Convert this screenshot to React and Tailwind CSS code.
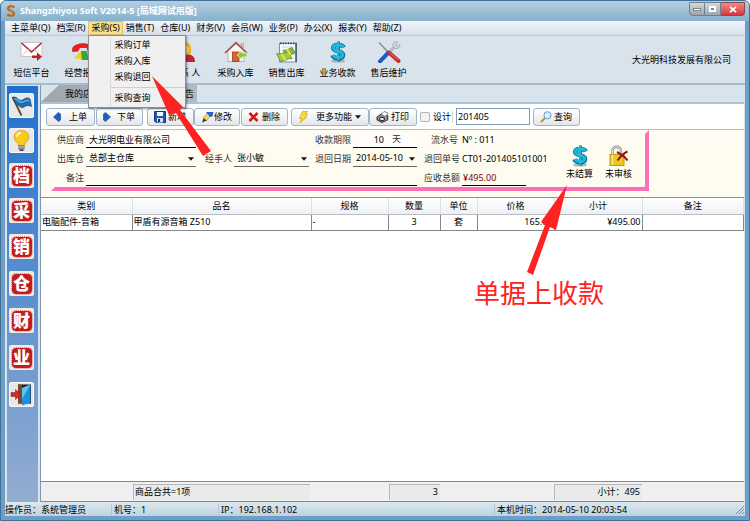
import {useState} from 'react';

const MailIcon = () => (
    <svg width="24" height="22" viewBox="0 0 24 22">
        <rect x="1" y="1.5" width="21" height="14" fill="#fdfdfd" stroke="#c9c4c6" />
        <path d="M1.5 2 L11.5 11 L21.5 2" fill="none" stroke="#b5203a" strokeWidth="1.6" />
        <path d="M1.5 15 L8.5 8.5 M21.5 15 L14.5 8.5" stroke="#d9ccd0" />
        <path d="M12 14.5 H17 V11.5 L22 15.8 L17 20 V17 H12 Z" fill="#c41f26" />
    </svg>
);

const PhoneIcon = () => (
    <svg width="24" height="22" viewBox="0 0 24 22">
        <path d="M1 9 C1 0 23 0 23 9 L22 11 H17 L15.5 7 H9 L7 10.5 L1.5 11 Z" fill="#e02222" />
        <path d="M3 17 L10 10 L12 19 Z" fill="#f6cf1c" />
        <path d="M10 10 H16 L18 19 H11 Z" fill="#3aa33c" />
    </svg>
);

const PersonIcon = () => (
    <svg width="24" height="22" viewBox="0 0 24 22">
        <path d="M2 21 C2 13 8 13 12 13 C17 13 22 14 22 21 Z" fill="#c8202c" />
        <path d="M9 13 L12 20 L15 13 Z" fill="#2a4fb4" />
        <path d="M6 8 C5 0 18 -1 18 7 L18 12 L14 14 H9 Z" fill="#e5b61c" />
        <ellipse cx="11.5" cy="8.5" rx="4" ry="5" fill="#f8d3a0" />
    </svg>
);

const HouseIcon = () => (
    <svg width="24" height="22" viewBox="0 0 24 22">
        <path d="M4 10 V20.5 H20 V10 L12 3 Z" fill="#fbf7f0" stroke="#b9b2aa" />
        <path d="M17 2.5 H19.5 V7 L17 5 Z" fill="#cfc8c0" stroke="#9c8f86" strokeWidth=".5" />
        <path d="M1 12 L12 1.5 L23 12" fill="none" stroke="#a64a3c" strokeWidth="1.6" />
        <rect x="8.5" y="11" width="6.5" height="9.5" fill="#d9642c" stroke="#7d3415" strokeWidth=".7" />
        <path d="M13 14 L18 9.5 V12 H23 V16 H18 V18.5 Z" fill="#8fc640" stroke="#e8f4cf" strokeWidth=".8" />
    </svg>
);

const NoteIcon = () => (
    <svg width="24" height="22" viewBox="0 0 24 22">
        <rect x="4.5" y="2.5" width="17" height="18.5" fill="#fafcff" stroke="#7f8fa8" />
        <path d="M21 3 V21" stroke="#3d5575" strokeWidth="1.5" />
        <path d="M5 2.2 H21.5" stroke="#3c4a60" strokeWidth="2" strokeDasharray="1.3 1.3" />
        <path d="M7 6 H19 M7 17 H19" stroke="#c3d0e2" />
        <path d="M8 9 C11 10 13 8 17 6.5 L20.5 12 C17 13 14 15 11 15.5 Z" fill="#7fb936" stroke="#4e8a1f" strokeWidth=".7" />
        <path d="M1.5 12.5 C5 14 9 11 13 11 L17 17.5 C12 17 10 21 5.5 20.5 Z" fill="#98cc4a" stroke="#4e8a1f" strokeWidth=".7" />
        <path d="M12 8.5 L15.5 13.8 M6.5 13 L10.5 19.2" stroke="#f3dc4a" strokeWidth="2.2" />
    </svg>
);

const DollarIcon = () => (
    <svg width="18" height="22" viewBox="0 0 18 22">
        <ellipse cx="9" cy="20" rx="7" ry="1.6" fill="#8b98a6" opacity=".7" />
        <path
            d="M14.5 6.5 C13.5 3.5 4.5 2.6 4.2 7 C4 11 14.2 9.4 14 14 C13.6 18.4 5 18 3.6 14.2"
            fill="none"
            stroke="#0b6f92"
            strokeWidth="4.6"
        />
        <path d="M9.5 .5 V20.5" stroke="#0b6f92" strokeWidth="2.8" />
        <path
            d="M14 6.2 C13 3.4 4.7 2.8 4.4 6.8 C4.2 10.8 13.8 9.4 13.6 13.8 C13.2 17.6 5.4 17.4 4 14"
            fill="none"
            stroke="#1db6dc"
            strokeWidth="3.2"
        />
        <path d="M9 1 V20" stroke="#2fc0e2" strokeWidth="1.4" />
    </svg>
);

const ToolsIcon = () => (
    <svg width="24" height="22" viewBox="0 0 24 22">
        <path d="M2 1.5 L12 12" stroke="#8d8f92" strokeWidth="1.6" />
        <path d="M12 11 L20 4" stroke="#b9bcc0" strokeWidth="3" />
        <path d="M16 5 C15 1 19 0 21 1.2 L18.6 3.6 L20.4 5.6 L23 3.4 C23.5 6 21 8.6 17.6 7.4 Z" fill="#d4d6d9" stroke="#8e9195" strokeWidth=".6" />
        <path d="M11.5 11.5 L3 20.3" stroke="#2259c4" strokeWidth="4" strokeLinecap="round" />
        <path d="M12.5 12 L21.5 20" stroke="#cf2626" strokeWidth="4" strokeLinecap="round" />
        <path d="M12.5 11.4 L21 19" stroke="#f08080" strokeWidth=".9" />
    </svg>
);

const LockIcon = () => (
    <svg width="20" height="22" viewBox="0 0 20 22">
        <path d="M3.5 10 V6 C3.5 .5 12 .5 12 6 V8" fill="none" stroke="#8c8c8c" strokeWidth="2.6" />
        <path d="M3.5 10 V6 C3.5 .5 12 .5 12 6 V8" fill="none" stroke="#f4f4f4" strokeWidth="1" />
        <rect x="1" y="9.5" width="14" height="11" fill="#ecc81c" stroke="#c19a10" />
        <path d="M3.5 10 V20" stroke="#fbea86" strokeWidth="1.5" />
        <path d="M8 7 C12 9 16 12 18.5 15.5 M18.5 6.5 C14 8.5 11 12 8.5 15.5" fill="none" stroke="#8d1518" strokeWidth="2" />
    </svg>
);

const FlagIcon = () => (
    <svg width="23" height="23" viewBox="0 0 23 23">
        <path d="M2.5 3 L11.5 21.5" stroke="#6d4420" strokeWidth="1.8" />
        <path d="M2.8 3.5 C7 1.5 8.5 8 12.5 6 C15.5 4.2 17 3 20 5 L21.5 12.5 C18 10.5 16 12 13.5 13.2 C10 15 8.5 9.5 6.5 11 Z" fill="#1d6fb4" stroke="#0e3f73" strokeWidth=".7" />
        <path d="M4.5 5 C8 4.5 8.5 9.5 13 8 C16 6.5 17 6 19.5 7" fill="none" stroke="#69b5e4" strokeWidth="1.3" />
    </svg>
);

const BulbIcon = () => (
    <svg width="23" height="23" viewBox="0 0 23 23">
        <path d="M8 14.5 C1 9 4.5 1.5 11.5 1.5 C18.5 1.5 22 9 15 14.5 L14.5 16.5 H8.5 Z" fill="#f9c91b" stroke="#d99a10" strokeWidth=".8" />
        <path d="M7 8 C7 5 9 3.8 11 3.8" fill="none" stroke="#fff3b0" strokeWidth="2" />
        <rect x="8.3" y="16" width="6.4" height="4.5" fill="#7e8287" />
        <path d="M8.3 18 H14.7" stroke="#d3d6d9" strokeWidth=".8" />
        <path d="M9.5 21.3 H13.5" stroke="#3f4246" strokeWidth="1.4" />
    </svg>
);

const ExitIcon = () => (
    <svg width="23" height="23" viewBox="0 0 23 23">
        <rect x="8" y="1.5" width="13" height="19" fill="#1d1a17" />
        <rect x="8" y="1.5" width="4" height="19" fill="#7a4a25" />
        <path d="M12 5 L20.5 1.5 V19.5 L12 22.5 Z" fill="#1c93d8" />
        <path d="M12 5 L20.5 1.5 L12 16 Z" fill="#5cc4f2" />
        <path d="M1 9.5 H5.5 V6.5 L11 11.5 L5.5 16.5 V13.5 H1 Z" fill="#d8262a" stroke="#8f1216" strokeWidth=".5" />
    </svg>
);

const LeftIcon = () => (
    <svg width="8" height="10" viewBox="0 0 8 10">
        <path d="M5.5 .5 L.5 5 L5.5 9.5 L7.5 8 V2 Z" fill="#1f5fc0" stroke="#123c86" strokeWidth=".6" />
    </svg>
);

const RightIcon = () => (
    <svg width="8" height="10" viewBox="0 0 8 10">
        <path d="M2.5 .5 L7.5 5 L2.5 9.5 L.5 8 V2 Z" fill="#1f5fc0" stroke="#123c86" strokeWidth=".6" />
    </svg>
);

const SaveIcon = () => (
    <svg width="12" height="12" viewBox="0 0 12 12">
        <path d="M.5 .5 H11.5 V11.5 H2 L.5 10 Z" fill="#2458b8" stroke="#12357e" />
        <rect x="3" y="1" width="6" height="4" fill="#f2f6fc" />
        <rect x="3" y="7" width="6" height="4.5" fill="#d3dff2" />
        <rect x="4" y="8" width="2" height="3" fill="#12357e" />
    </svg>
);

const PencilIcon = () => (
    <svg width="13" height="12" viewBox="0 0 13 12">
        <path d="M1 11.5 L2.5 7 L6 9.5 Z" fill="#3a3a3a" />
        <path d="M2.5 7 L6.5 1.5 L10 4 L6 9.5 Z" fill="#f2dc5a" stroke="#8a7a2a" strokeWidth=".5" />
        <path d="M5 1 L12.5 1 L11.5 5.5 L9 6 Z" fill="#2a62c4" />
    </svg>
);

const CrossIcon = () => (
    <svg width="11" height="10" viewBox="0 0 11 10">
        <path d="M1.5 1 L9.5 9 M9.5 1 L1.5 9" stroke="#d01818" strokeWidth="2.6" />
    </svg>
);

const BoltIcon = () => (
    <svg width="11" height="12" viewBox="0 0 11 12">
        <path d="M4.5 .5 H9.5 L7.5 3.5 H9.5 L7 6.5 H8.5 L2 11.5 L4 7.5 H1.5 Z" fill="#f7dd3c" stroke="#c9a21c" strokeWidth=".7" />
    </svg>
);

const PrinterIcon = () => (
    <svg width="13" height="12" viewBox="0 0 13 12">
        <path d="M1 6 L6 2.5 L12 5 L11.5 9 L6 11.5 L1 9 Z" fill="#8f9296" stroke="#2e3033" />
        <path d="M5 3.5 L8 .5 L12 2 L9.5 5.5 Z" fill="#fff" stroke="#55585c" strokeWidth=".7" />
        <ellipse cx="6" cy="8" rx="2.6" ry="1.6" fill="#f4f4f4" stroke="#222" />
    </svg>
);

const SearchIcon = () => (
    <svg width="12" height="12" viewBox="0 0 12 12">
        <path d="M1 11 L5 7" stroke="#d08a2a" strokeWidth="2" />
        <circle cx="7.5" cy="4.3" r="3.6" fill="#d6eefb" stroke="#5c9ccc" />
    </svg>
);

const CaretIcon = ({className}) => (
    <svg width="6" height="4" viewBox="0 0 6 4" className={className}>
        <path d="M0 .3 H6 L3 3.7 Z" fill="#111" />
    </svg>
);

const menus = [
    '主菜单(Q)',
    '档案(R)',
    '采购(S)',
    '销售(T)',
    '仓库(U)',
    '财务(V)',
    '会员(W)',
    '业务(P)',
    '办公(X)',
    '报表(Y)',
    '帮助(Z)',
];

const reportShortcuts = [
    {name: '短信平台', icon: <MailIcon />},
    {name: '经营报表', icon: <PhoneIcon />},
];

const tradeShortcuts = [
    {name: '联 系 人', icon: <PersonIcon />},
    {name: '采购入库', icon: <HouseIcon />},
    {name: '销售出库', icon: <NoteIcon />},
    {name: '业务收款', icon: <DollarIcon />},
    {name: '售后维护', icon: <ToolsIcon />},
];

const columns = [
    {name: '类别', width: 'w-[91px]', align: 'text-left', value: '电脑配件-音箱'},
    {name: '品名', width: 'w-[179px]', align: 'text-left', value: '甲盾有源音箱 Z510'},
    {name: '规格', width: 'w-[77px]', align: 'text-left', value: '-'},
    {name: '数量', width: 'w-[52px]', align: 'text-center', value: '3'},
    {name: '单位', width: 'w-[37px]', align: 'text-center', value: '套'},
    {name: '价格', width: 'w-[77px]', align: 'text-right', value: '165.00'},
    {name: '小计', width: 'w-[88px]', align: 'text-right', value: '¥495.00'},
    {name: '备注', width: '', align: 'text-left', value: ''},
];

const ShortcutGroup = ({items}) => (
    <div className="flex">
        {items.map((item) => (
            <button key={item.name} className="w-[51px] h-[38px] flex flex-col items-center justify-between whitespace-nowrap">
                {item.icon}
                <span>{item.name}</span>
            </button>
        ))}
    </div>
);

const SideButton = ({label, children}) => (
    <button
        aria-label={label}
        className="w-[25px] h-[25px] flex items-center justify-center rounded-xs border border-[#f8f8f8] bg-[#e6e8ea]"
    >
        {children}
    </button>
);

const Stamp = ({text}) => (
    <button className="w-[25px] h-[25px] flex items-center justify-center rounded-xs bg-[#f3ebe2]">
        <span className="w-5 h-5 flex items-center justify-center rounded-sm bg-[#c01c22] outline outline-dotted outline-[#d8827e] text-white text-[17px] leading-none font-black">
            {text}
        </span>
    </button>
);

const ToolButton = ({icon, children, className}) => (
    <button
        className={`h-[18px] flex items-center justify-between rounded-[3px] border border-[#9fb6c9] bg-linear-to-b from-white to-[#e3e6ea] pl-[6px] pr-[7px] whitespace-nowrap ${className}`}
    >
        {icon}
        {children}
    </button>
);

const SelectField = ({id, value}) => (
    <div className="relative border-b border-[#6b6660] text-black">
        <select id={id} defaultValue={value} className="w-full h-[15px] appearance-none bg-transparent pl-[3px] outline-none">
            <option>{value}</option>
        </select>
        <CaretIcon className="absolute right-[2px] top-[6px] pointer-events-none" />
    </div>
);

const App = () => {
    const [openMenu, setOpenMenu] = useState('采购(S)');

    return (
        <div className="relative min-h-screen flex flex-col bg-[#6d9fc6] border border-[#41719b] rounded-t-md overflow-hidden px-1 pb-1 text-[9px] leading-[12px] text-black font-['Noto_Sans','Noto_Sans_CJK_SC',sans-serif]">
            {/* Title bar */}
            <header className="-mx-1 h-5 flex items-center justify-between bg-linear-to-b from-[#b4cfe1] to-[#86b0cb] pl-[5px] pr-1">
                <div className="flex items-center gap-1">
                    <svg width="10" height="14" viewBox="0 0 10 14">
                        <path d="M8.5 3.5 C7 1.5 2 1.8 2 4.5 C2 7.5 8 6.3 8 9.5 C8 12.5 2.5 12.3 1.5 10" fill="none" stroke="#b5651d" strokeWidth="2" />
                        <path d="M5 0 V14" stroke="#d98a2b" />
                    </svg>
                    <h1 className="font-bold text-white">Shangzhiyou Soft V2014-5 [局域网试用版]</h1>
                </div>
                <div className="self-start flex mt-px">
                    <button aria-label="最小化" className="w-4 h-[14px] flex items-center justify-center rounded-bl-sm border border-[#6b7f8f] bg-linear-to-b from-[#d4d8da] to-[#9ea6ab]">
                        <span className="w-2 h-[3px] border border-[#7b858c] bg-white" />
                    </button>
                    <button aria-label="最大化" className="w-4 h-[14px] flex items-center justify-center border border-l-0 border-[#6b7f8f] bg-linear-to-b from-[#d4d8da] to-[#9ea6ab]">
                        <span className="w-[7px] h-[6px] border-2 border-white bg-[#7b858c]" />
                    </button>
                    <button aria-label="关闭" className="w-6 h-[14px] flex items-center justify-center rounded-br-sm border border-l-0 border-[#8a4a4a] bg-linear-to-b from-[#e88b86] to-[#d8323a]">
                        <svg width="8" height="7" viewBox="0 0 8 7">
                            <path d="M1 .8 L7 6.2 M7 .8 L1 6.2" stroke="#fff" strokeWidth="1.8" />
                        </svg>
                    </button>
                </div>
            </header>

            {/* Menu bar */}
            <nav className="h-[15px] flex items-center border-b border-[#bac9d8] bg-linear-to-b from-[#f2f5f9] to-[#d5dfea] pl-[3px]">
                {menus.map((menu) => (
                    <div key={menu} className="relative">
                        <button
                            onClick={() => setOpenMenu(menu)}
                            className={`h-[14px] px-[3px] whitespace-nowrap ${
                                openMenu === menu ? 'bg-[#fbe08c] shadow-[0_0_0_1px_#d9c27a_inset]' : ''
                            }`}
                        >
                            {menu}
                        </button>
                        {menu === '采购(S)' && openMenu === menu && (
                            <div className="absolute left-0 top-[14px] z-10 w-[98px] border border-[#8d8d8d] bg-[#f0f0f0] py-px shadow-[1px_1px_2px_#0006]">
                                <div className="ml-[21px] border-l border-[#dcdcdc]">
                                    <button className="block h-4 w-full pl-[3px] text-left">采购订单</button>
                                    <button className="block h-4 w-full pl-[3px] text-left">采购入库</button>
                                    <button className="block h-4 w-full pl-[3px] text-left">采购退回</button>
                                    <hr className="my-[2px] border-[#cfcfcf]" />
                                    <button className="block h-4 w-full pl-[3px] text-left">采购查询</button>
                                </div>
                            </div>
                        )}
                    </div>
                ))}
            </nav>

            {/* Shortcut bar */}
            <section className="h-[49px] flex items-center justify-between border-b-2 border-[#a3bdd2] bg-[#d9e3ec] pl-px pr-[14px]">
                <div className="flex gap-[51px]">
                    <ShortcutGroup items={reportShortcuts} />
                    <ShortcutGroup items={tradeShortcuts} />
                </div>
                <p>大光明科技发展有限公司</p>
            </section>

            <div className="flex-1 flex bg-[#d9e3ec]">
                {/* Side bar */}
                <aside className="mx-[2px] mt-px flex flex-col gap-[11px] bg-linear-to-b from-[#1c70cc] to-[#93add0] pt-[7px] pl-[2px] pr-1">
                    <div className="flex flex-col gap-[10px]">
                        <SideButton label="导航">
                            <FlagIcon />
                        </SideButton>
                        <SideButton label="提示">
                            <BulbIcon />
                        </SideButton>
                        <Stamp text="档" />
                        <Stamp text="采" />
                    </div>
                    <div className="flex flex-col gap-3">
                        <Stamp text="销" />
                        <Stamp text="仓" />
                        <Stamp text="财" />
                        <Stamp text="业" />
                        <SideButton label="退出">
                            <ExitIcon />
                        </SideButton>
                    </div>
                </aside>

                <main className="flex-1 min-w-0 flex flex-col border-l border-[#7d98b3] bg-white">
                    {/* Tabs */}
                    <div className="h-[19px] border-b-2 border-[#a9c3d8] bg-[#d9e3ec]">
                        <div className="w-[156px] h-[17px] flex items-center justify-between bg-linear-to-r from-[#a2a6aa] to-[#b4b9be] pl-6 pr-[3px] [clip-path:polygon(18px_0,100%_0,100%_100%,0_100%)]">
                            <button>我的店铺</button>
                            <button>报告</button>
                        </div>
                    </div>

                    {/* Actions */}
                    <div className="h-[26px] flex items-center border-b border-[#a9c3d8] pl-[5px]">
                        <ToolButton icon={<LeftIcon />} className="w-[49px] mr-px">上单</ToolButton>
                        <ToolButton icon={<RightIcon />} className="w-[47px] mr-1">下单</ToolButton>
                        <ToolButton icon={<SaveIcon />} className="w-[47px]">新增</ToolButton>
                        <ToolButton icon={<PencilIcon />} className="w-[46px] mr-px">修改</ToolButton>
                        <ToolButton icon={<CrossIcon />} className="w-[47px] mr-[3px]">删除</ToolButton>
                        <ToolButton icon={<BoltIcon />} className="w-[78px]">
                            <span className="pl-1">更多功能</span>
                            <CaretIcon />
                        </ToolButton>
                        <ToolButton icon={<PrinterIcon />} className="w-[48px] mr-[3px]">打印</ToolButton>
                        <label className="flex items-center gap-[3px] border-r border-[#d5d5d5] pr-px">
                            <input
                                type="checkbox"
                                className="w-[10px] h-[10px] appearance-none rounded-xs border border-[#b5b5b5] bg-[#f3f3f3] checked:bg-[#1f5fc0]"
                            />
                            设计
                        </label>
                        <input
                            aria-label="月份"
                            defaultValue="201405"
                            className="w-[74px] h-[17px] ml-[3px] mr-[3px] border border-[#7f9db9] bg-white px-px outline-none"
                        />
                        <ToolButton icon={<SearchIcon />} className="w-[47px]">查询</ToolButton>
                    </div>

                    {/* Bill header */}
                    <section className="bg-[#fefbf0] pl-[10px] pb-[6px]">
                        <form className="w-fit flex items-center border-4 border-t-transparent border-l-transparent border-r-[#ff6fb5] border-b-[#ff6fb5]">
                            <div className="grid grid-cols-[31px_110px_34px_75px_40px_64px_41px_85px] auto-rows-[19px] gap-x-[2px] items-center whitespace-nowrap text-[#333] -ml-[2px] -mt-1">
                                <label htmlFor="supplier" className="text-right">供应商</label>
                                <input id="supplier" defaultValue="大光明电业有限公司" className="w-full h-4 border-b border-black bg-white/60 pl-[3px] text-black outline-none" />
                                <label htmlFor="term" className="col-start-5 text-right">收款期限</label>
                                <div className="flex items-center border-b border-black bg-white/60">
                                    <input id="term" defaultValue="10" className="w-[31px] h-[15px] text-right text-black outline-none" />
                                    <span className="pl-2">天</span>
                                </div>
                                <span className="text-right pr-[2px]">流水号</span>
                                <output className="text-black">Nº : 011</output>

                                <label htmlFor="store" className="text-right">出库仓</label>
                                <SelectField id="store" value="总部主仓库" />
                                <label htmlFor="handler" className="text-right">经手人</label>
                                <SelectField id="handler" value="张小敏" />
                                <label htmlFor="date" className="text-right">退回日期</label>
                                <SelectField id="date" value="2014-05-10" />
                                <span className="text-right">退回单号</span>
                                <output className="text-black">CT01-201405101001</output>

                                <label htmlFor="remark" className="text-right">备注</label>
                                <input id="remark" className="col-span-5 w-full h-4 border-b border-black outline-none" />
                                <label htmlFor="total" className="text-right">应收总额</label>
                                <input id="total" defaultValue="¥495.00" className="w-[64px] h-4 border-b border-black pl-px text-[#800000] outline-none" />
                            </div>
                            <div className="flex gap-3 pl-[19px] pr-[13px] pt-1">
                                <button type="button" className="flex flex-col items-center gap-px">
                                    <DollarIcon />
                                    未结算
                                </button>
                                <button type="button" className="flex flex-col items-center gap-px">
                                    <LockIcon />
                                    未审核
                                </button>
                            </div>
                        </form>
                    </section>

                    {/* Bill lines */}
                    <div className="flex-1 border-t border-[#8b8f93]">
                        <table className="w-full table-fixed border-collapse">
                            <thead>
                                <tr className="h-4 bg-linear-to-b from-white to-[#eef0f4]">
                                    {columns.map((column) => (
                                        <th key={column.name} className={`border-r border-b border-r-[#dcdfe4] border-b-[#b9bdc2] p-0 font-normal ${column.width}`}>
                                            {column.name}
                                        </th>
                                    ))}
                                </tr>
                            </thead>
                            <tbody>
                                <tr className="h-4">
                                    {columns.map((column) => (
                                        <td key={column.name} className={`border-r border-b border-[#85898d] px-px py-0 whitespace-nowrap ${column.align}`}>
                                            {column.value}
                                        </td>
                                    ))}
                                </tr>
                            </tbody>
                        </table>
                    </div>

                    {/* Totals */}
                    <div className="h-[21px] grid grid-cols-[92px_177px_79px_51px_114px_88px_1fr] items-center border-y border-[#85898d] bg-[#f0f0f0]">
                        <div className="col-start-2 h-4 flex items-center border-t border-l border-[#b4b8b8] bg-[#e8ebea] pl-px">商品合共=1项</div>
                        <div className="col-start-4 h-4 flex items-center justify-end border-t border-l border-[#b4b8b8] bg-[#e8ebea] pr-[2px]">3</div>
                        <div className="col-start-6 h-4 flex items-center justify-end border-t border-l border-[#b4b8b8] bg-[#e8ebea] pr-[2px]">小计：495</div>
                    </div>
                </main>
                <div className="w-px bg-[#d9e3ec]" />
            </div>

            {/* Status bar */}
            <footer className="h-[14px] flex items-center bg-linear-to-b from-[#dce8ef] to-[#bed3e0] pt-px whitespace-nowrap">
                <span className="w-[106px]">操作员：系统管理员</span>
                <span className="w-[107px] border-l border-[#b3c5d1] pl-[2px]">机号：1</span>
                <span className="flex-1 border-l border-[#b3c5d1] pl-[2px]">IP：192.168.1.102</span>
                <span className="w-[241px] border-l border-[#b3c5d1] pl-[2px]">本机时间：2014-05-10 20:03:54</span>
                <svg width="10" height="10" viewBox="0 0 10 10">
                    <path d="M1 9 L9 1 M4 9 L9 4 M7 9 L9 7" stroke="#7793a8" />
                </svg>
            </footer>

            {/* Guide marks over the window */}
            <svg width="60" height="82" viewBox="0 0 60 82" className="absolute left-[150px] top-[74px] z-20 pointer-events-none">
                <path d="M1 1 L32 32 L29 35 L60 76 L52 81 L25 38 L18 40 Z" fill="#ff2222" />
            </svg>
            <svg width="42" height="92" viewBox="0 0 42 92" className="absolute left-[525px] top-[183px] z-20 pointer-events-none">
                <path d="M41 1 L30 46 L24 43 L7 91 L1 88 L19 41 L15 38 Z" fill="#ff2222" />
            </svg>
            <p className="absolute left-[473px] top-[276px] z-20 text-[26px] leading-8 text-[#ff2222]">单据上收款</p>
        </div>
    );
};

export default App;
